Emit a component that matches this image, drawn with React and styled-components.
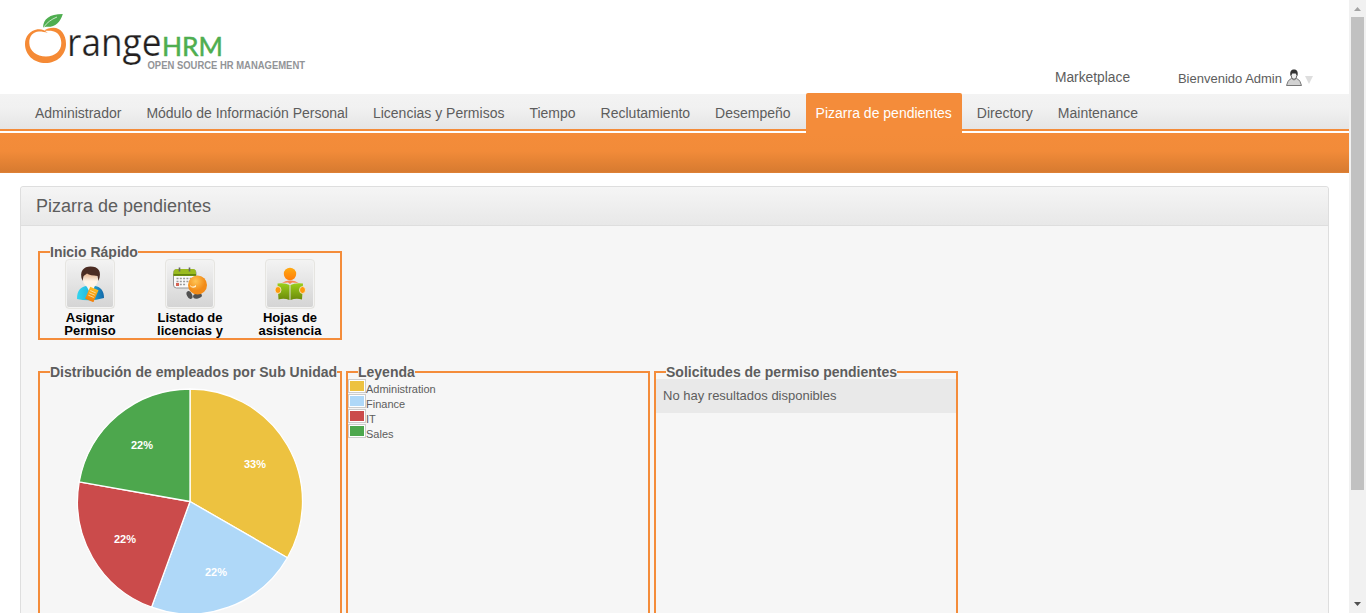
import React from "react";
import styled, { createGlobalStyle } from "styled-components";

const GlobalStyle = createGlobalStyle`
  * { box-sizing: border-box; }
  body { margin: 0; background: #fff; overflow: hidden; }
`;

const Viewport = styled.div`
  display: flex;
  width: 100%;
  height: 613px;
  overflow: hidden;
  font-family: Arial, "Liberation Sans", sans-serif;
  color: #5d5d5d;
`;
const Page = styled.div`
  flex: 1;
  min-width: 0;
`;
const Header = styled.header`
  display: flex;
  justify-content: space-between;
  height: 94px;
  padding: 8px 36px 0 20px;
`;
const Logo = styled.svg`
  display: block;
  width: 290px;
  height: 70px;
  overflow: visible;
`;
const UserArea = styled.div`
  display: flex;
  align-items: flex-start;
  padding-top: 61px;
`;
const MarketLink = styled.a`
  width: 75px;
  font-size: 13.8px;
  line-height: 18px;
  margin-right: 48px;
`;
const Welcome = styled.div`
  display: flex;
  font-size: 13px;
  line-height: 20px;
`;
const UserGlyph = styled.svg`
  width: 16px;
  height: 17px;
  margin-left: 4px;
`;
const Caret = styled.svg`
  width: 8px;
  height: 8px;
  margin: 7px 0 0 3px;
`;

const Menu = styled.nav`
  display: flex;
  gap: 5px;
  height: 37px;
  padding-left: 25px;
  background: linear-gradient(#f3f3f3 0%, #f1f1f1 40%, #e5e5e5 100%);
  border-bottom: 2px solid #f48c3a;
`;
const MenuItem = styled.a`
  height: ${(p) => (p.$active ? "40px" : "35px")};
  margin-top: ${(p) => (p.$active ? "-1px" : "0")};
  padding: ${(p) => (p.$active ? "12px" : "11px")} 10px 0;
  border-radius: 2px 2px 0 0;
  font-size: 14px;
  line-height: 16px;
  white-space: nowrap;
  color: ${(p) => (p.$active ? "#fff" : "#5d5d5d")};
  background: ${(p) => (p.$active ? "#f48c3a" : "transparent")};
`;
const SubMenu = styled.div`
  height: 40px;
  margin-top: 2px;
  background: linear-gradient(#f48c3a 0%, #f28b39 45%, #d87b30 96%, #e08338 100%);
`;

const Panel = styled.section`
  height: 500px;
  margin: 13px 20px 0;
  border: 1px solid #dedede;
  border-radius: 3px 3px 0 0;
  background: #f6f6f6;
`;
const PanelTitle = styled.h1`
  height: 39px;
  margin: 0;
  padding-left: 15px;
  border-bottom: 1px solid #dedede;
  background: linear-gradient(#f5f5f5, #e8e8e8);
  border-radius: 3px 3px 0 0;
  font-size: 18px;
  font-weight: 400;
  line-height: 38px;
`;
const PanelBody = styled.div`
  padding: 18px 17px 0;
`;
const Row = styled.div`
  display: flex;
  gap: 4px;
  margin-bottom: 24px;
`;
const Group = styled.fieldset`
  width: 304px;
  min-width: 0;
  height: ${(p) => p.$height}px;
  margin: 0;
  padding: 0;
  border: 2px solid #f48c3a;
`;
const GroupTitle = styled.legend`
  margin-left: 10px;
  padding: 0;
  font-size: 14px;
  font-weight: 700;
  line-height: 16px;
  white-space: nowrap;
`;
const Shortcuts = styled.div`
  display: flex;
  margin-top: -1px;
`;
const Shortcut = styled.a`
  display: flex;
  flex-direction: column;
  align-items: center;
  width: 100px;
  gap: 2px;
`;
const Tile = styled.div`
  display: flex;
  align-items: center;
  justify-content: center;
  width: 50px;
  height: 50px;
  border: 1px solid #e6e5e1;
  border-radius: 4px;
  box-shadow: inset 0 0 0 1px #f3f3f2;
  background: linear-gradient(#f3f3f3, #d4d4d4);
  svg { display: block; width: 36px; height: 36px; }
`;
const ShortcutLabel = styled.div`
  width: 84px;
  height: 27px;
  overflow: hidden;
  font-size: 13px;
  font-weight: 700;
  line-height: 13px;
  text-align: center;
  color: #000;
`;
const Pie = styled.svg`
  display: block;
  width: 300px;
  height: 240px;
`;
const Legend = styled.ul`
  margin: -1px 0 0;
  padding: 0;
  list-style: none;
`;
const LegendItem = styled.li`
  display: flex;
  height: 15px;
  font-size: 11px;
  line-height: 21px;
`;
const Swatch = styled.span`
  width: 18px;
  height: 14px;
  padding: 1px;
  border: 1px solid #ccc;
  background: linear-gradient(${(p) => p.$color}, ${(p) => p.$color}) content-box, #fff;
`;
const EmptyRow = styled.div`
  height: 34px;
  margin-top: -1px;
  padding-left: 7px;
  background: #e9e9e9;
  font-size: 13px;
  line-height: 34px;
`;

const ScrollTrack = styled.div`
  display: flex;
  flex-direction: column;
  align-items: center;
  width: 17px;
  background: #f1f1f1;
`;
const ScrollArrow = styled.svg`
  width: 17px;
  height: 17px;
`;
const ScrollThumb = styled.div`
  width: 13px;
  height: 473px;
  margin-bottom: 106px;
  background: #c1c1c1;
`;

function BrandLogo() {
  return (
    <Logo viewBox="20 8 290 70">
      <path
        fill="#f58a35"
        d="M47.800 33C45 30 41.500 28.800 37.500 29.300C30 30.500 25 36.500 25 44C25 55 34 63 45.500 63C57 63 66 55 66 44C66 34.500 60.500 27.800 53.500 27.800C50 27.800 46 29 44 31C48 31 50 30.700 52 31C57.500 31.500 61.300 36.500 61.300 43C61.300 51 55 56.500 46 56.500C36.500 56.500 29.500 51 29.300 43C29 36.500 33 31.800 39 31.600C42.500 31.600 45 32.200 47.800 33Z"
      />
      <path fill="#4fae50" d="M43 27.500C43.500 19 49 14.200 62.800 14C60 23 55 27.500 46 26.800L43 27.500Z" />
      <path stroke="#fff" strokeWidth=".7" fill="none" d="M43.500 27.500C47 22.500 51 19.500 57 17" />
      <text x="67" y="56" fontFamily="'Open Sans', sans-serif" fontSize="37.500" fontWeight="400" fill="#231f20" stroke="#fff" strokeWidth=".25" textLength="94.500" lengthAdjust="spacingAndGlyphs">range</text>
      <text x="162" y="56" fontFamily="Lato, sans-serif" fontSize="26.500" fill="#4fae50" stroke="#4fae50" strokeWidth=".5" textLength="61" lengthAdjust="spacingAndGlyphs">HRM</text>
      <text x="147.500" y="69" fontFamily="Liberation Sans, sans-serif" fontWeight="700" fontSize="10" fill="#929497" textLength="157.500" lengthAdjust="spacingAndGlyphs">OPEN SOURCE HR MANAGEMENT</text>
    </Logo>
  );
}

function AssignLeaveIcon() {
  return (
    <svg viewBox="0 0 36 36">
      <defs>
        <linearGradient id="shirt"><stop offset="0" stopColor="#35d5ee" /><stop offset=".45" stopColor="#26b9df" /><stop offset="1" stopColor="#1467a8" /></linearGradient>
        <linearGradient id="face" x2="0" y2="1"><stop offset="0" stopColor="#dc9d70" /><stop offset=".6" stopColor="#fff3e6" /></linearGradient>
        <linearGradient id="card" x2="0" y2="1"><stop offset="0" stopColor="#ffbc20" /><stop offset="1" stopColor="#f17e0a" /></linearGradient>
      </defs>
      <path fill="url(#shirt)" d="M5 33C5 24 9 21 14 20L18 22L23 20C29 21 32 25 32 32Q18 36 5 33Z" />
      <path fill="#f3f8fa" d="M14 19L23 19L21 25L17 25Z" />
      <ellipse cx="18.500" cy="13.500" rx="7.400" ry="8.300" fill="url(#face)" />
      <path fill="#4b2c23" d="M10.500 15C6.500 5 12 .500 18.500 .500C26 .500 30.500 5 26.500 15L25.500 10C21 9.500 17 9 15 7.500C13 9 12 9.500 11.500 10.500Z" />
      <g transform="rotate(23 20 28)">
        <rect x="15.500" y="22" width="9" height="13" fill="url(#card)" />
        <path stroke="#ffe1a0" strokeWidth=".8" d="M17 25.500h6M17 28h6M17 30.500h6" />
      </g>
    </svg>
  );
}

function LeaveListIcon() {
  return (
    <svg viewBox="0 0 36 36">
      <defs>
        <radialGradient id="ball" cx=".4" cy=".3"><stop offset="0" stopColor="#ffc555" /><stop offset="1" stopColor="#f28b18" /></radialGradient>
      </defs>
      <rect x="1.500" y="3.500" width="22.500" height="18.500" rx="3" fill="#fafafa" stroke="#969696" />
      <path fill="#9abb20" d="M1.500 7Q1.500 3 5 3H21Q24 3 24 7V10H1.500Z" />
      <path fill="#638410" d="M1.500 8h22.500v1.800H1.500Z" />
      <path stroke="#666" strokeWidth="1.600" d="M7.500 1.500v4M17.500 1.500v4" />
      <path stroke="#999" strokeWidth="1.600" strokeDasharray="2 1.300" d="M4.500 12.500h17M4.500 15.500h17M4.500 18.500h10" />
      <path fill="#d66354" d="M4 17h3v3H4Z" />
      <ellipse cx="17.500" cy="29" rx="2.600" ry="4.200" fill="#515151" transform="rotate(-25 17.500 29)" />
      <ellipse cx="25.500" cy="30" rx="4.500" ry="2.500" fill="#515151" transform="rotate(-12 25.500 30)" />
      <circle cx="25.500" cy="19" r="9.500" fill="url(#ball)" />
      <path fill="#fff2cf" d="M18 19Q20 22 24 19L24 21Q20 23 18 20Z" />
    </svg>
  );
}

function TimesheetIcon() {
  return (
    <svg viewBox="0 0 36 36">
      <defs>
        <linearGradient id="orange" x2="0" y2="1"><stop offset="0" stopColor="#ffaa12" /><stop offset="1" stopColor="#ff7d0a" /></linearGradient>
        <linearGradient id="book" x2="0" y2="1"><stop offset="0" stopColor="#9ccf1b" /><stop offset="1" stopColor="#6b8909" /></linearGradient>
      </defs>
      <circle cx="18" cy="8" r="6.200" fill="url(#orange)" />
      <path fill="#fa8550" d="M10 17Q14 14 18 14.500Q23 14 26.500 17L20 16.500L18 18L16 16.500Z" />
      <path fill="url(#book)" d="M5.500 17.500Q13 16.500 17.500 19V34Q12 32 6.500 33.500ZM18.500 19Q23 16.500 31 17.500L30 33.500Q24 32 18.500 34Z" />
      <ellipse cx="6" cy="24" rx="3" ry="3.500" fill="#ff9a0c" stroke="#f2eedf" strokeWidth=".8" />
      <ellipse cx="30.500" cy="24" rx="3" ry="3.500" fill="#ff9a0c" stroke="#f2eedf" strokeWidth=".8" />
    </svg>
  );
}

const menuItems = [
  "Administrador",
  "Módulo de Información Personal",
  "Licencias y Permisos",
  "Tiempo",
  "Reclutamiento",
  "Desempeño",
  "Pizarra de pendientes",
  "Directory",
  "Maintenance",
];

const shortcuts = [
  { label: ["Asignar", "Permiso"], Icon: AssignLeaveIcon },
  { label: ["Listado de", "licencias y"], Icon: LeaveListIcon },
  { label: ["Hojas de", "asistencia"], Icon: TimesheetIcon },
];

const units = [
  { name: "Administration", color: "#edc240", share: 3, label: "33%", x: 215, y: 88 },
  { name: "Finance", color: "#afd8f8", share: 2, label: "22%", x: 176, y: 196 },
  { name: "IT", color: "#cb4b4b", share: 2, label: "22%", x: 85, y: 163 },
  { name: "Sales", color: "#4da74d", share: 2, label: "22%", x: 102, y: 69 },
];

function UnitPie() {
  const cx = 150;
  const cy = 121.5;
  const r = 112.5;
  let start = 0;
  const point = (part) => {
    const a = (part / 9) * Math.PI * 2;
    return `${cx + r * Math.sin(a)} ${cy - r * Math.cos(a)}`;
  };
  return (
    <Pie viewBox="0 0 300 240">
      {units.map((u) => {
        const from = start;
        start += u.share;
        return (
          <path
            key={u.name}
            d={`M${cx} ${cy}L${point(from)}A${r} ${r} 0 0 1 ${point(start)}Z`}
            fill={u.color}
            stroke="#fff"
            strokeWidth="1.3"
            strokeLinejoin="round"
          />
        );
      })}
      {units.map((u) => (
        <text key={u.name} x={u.x} y={u.y} textAnchor="middle" fontFamily="Liberation Sans, sans-serif" fontWeight="700" fontSize="11" fill="#fff">
          {u.label}
        </text>
      ))}
    </Pie>
  );
}

export default function App() {
  return (
    <Viewport>
      <GlobalStyle />
      <Page>
        <Header>
          <BrandLogo />
          <UserArea>
            <MarketLink>Marketplace</MarketLink>
            <Welcome>
              Bienvenido Admin
              <UserGlyph viewBox="0 0 16 17">
                <path d="M.500 16.500L2 12.500Q3 10.500 5.500 9.500Q8 12.500 10.500 9.500Q13 10.500 14 12.500L15.500 16.500Z" fill="#d2d2d2" stroke="#777" />
                <ellipse cx="8" cy="6.500" rx="2.800" ry="3.800" fill="#eee" stroke="#666" />
                <path d="M4.500 7C3.500 2 5.500 0.500 8 0.500S12.500 2 11.500 7L10 4.500H6Z" fill="#333" />
              </UserGlyph>
              <Caret viewBox="0 0 8 8">
                <path d="M0 0h8L4 8Z" fill="#dedede" />
              </Caret>
            </Welcome>
          </UserArea>
        </Header>
        <Menu>
          {menuItems.map((m) => (
            <MenuItem key={m} $active={m === "Pizarra de pendientes"}>{m}</MenuItem>
          ))}
        </Menu>
        <SubMenu />
        <Panel>
          <PanelTitle>Pizarra de pendientes</PanelTitle>
          <PanelBody>
            <Row>
              <Group $height={96}>
                <GroupTitle>Inicio Rápido</GroupTitle>
                <Shortcuts>
                  {shortcuts.map(({ label, Icon }) => (
                    <Shortcut key={label[0]}>
                      <Tile><Icon /></Tile>
                      <ShortcutLabel>{label[0]}<br />{label[1]}</ShortcutLabel>
                    </Shortcut>
                  ))}
                </Shortcuts>
              </Group>
            </Row>
            <Row>
              <Group $height={300}>
                <GroupTitle>Distribución de empleados por Sub Unidad</GroupTitle>
                <UnitPie />
              </Group>
              <Group $height={300}>
                <GroupTitle>Leyenda</GroupTitle>
                <Legend>
                  {units.map((u) => (
                    <LegendItem key={u.name}><Swatch $color={u.color} />{u.name}</LegendItem>
                  ))}
                </Legend>
              </Group>
              <Group $height={300}>
                <GroupTitle>Solicitudes de permiso pendientes</GroupTitle>
                <EmptyRow>No hay resultados disponibles</EmptyRow>
              </Group>
            </Row>
          </PanelBody>
        </Panel>
      </Page>
      <ScrollTrack>
        <ScrollArrow viewBox="0 0 17 17"><path d="M5 11L8.500 7L12 11Z" fill="#a3a3a3" /></ScrollArrow>
        <ScrollThumb />
        <ScrollArrow viewBox="0 0 17 17"><path d="M5 6L8.500 10L12 6Z" fill="#505050" /></ScrollArrow>
      </ScrollTrack>
    </Viewport>
  );
}
